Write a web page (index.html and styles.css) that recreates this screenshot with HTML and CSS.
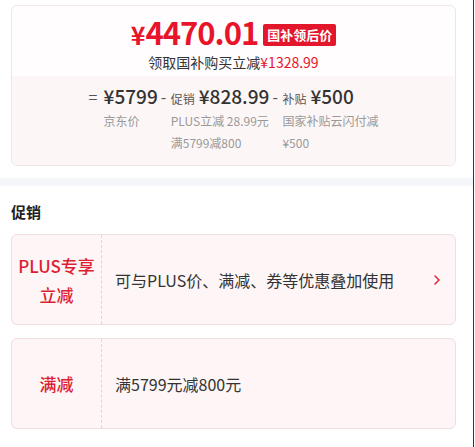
FILE: index.html
```html
<!DOCTYPE html>
<html lang="zh-CN">
<head>
    <meta charset="UTF-8">
    <meta name="viewport" content="width=device-width, initial-scale=1.0">
    <title>促销</title>
    <link rel="stylesheet" href="styles.css">
</head>
<body>
    <div class="page">
        <div class="price-card">
            <div class="price-top">
                <div class="final-line">
                    <span class="final-price"><span class="yen">¥</span>4470.01</span>
                    <span class="final-tag">国补领后价</span>
                </div>
                <div class="save-line">领取国补购买立减<span class="red">¥1328.99</span></div>
            </div>
            <div class="price-calc">
                <div class="calc-col">
                    <span class="mark eq">=</span>
                    <div class="calc-body">
                        <div class="calc-head"><span class="amount">¥5799</span></div>
                        <div class="calc-note">京东价</div>
                    </div>
                </div>
                <div class="calc-col">
                    <span class="mark">-</span>
                    <div class="calc-body">
                        <div class="calc-head"><span class="label">促销</span><span class="amount">¥828.99</span></div>
                        <div class="calc-note">PLUS立减 28.99元</div>
                        <div class="calc-note">满5799减800</div>
                    </div>
                </div>
                <div class="calc-col">
                    <span class="mark">-</span>
                    <div class="calc-body">
                        <div class="calc-head"><span class="label">补贴</span><span class="amount">¥500</span></div>
                        <div class="calc-note">国家补贴云闪付减</div>
                        <div class="calc-note">¥500</div>
                    </div>
                </div>
            </div>
        </div>

        <div class="divider"></div>

        <h2 class="section-title">促销</h2>

        <div class="promo">
            <div class="promo-name">PLUS专享<br>立减</div>
            <div class="promo-desc">可与PLUS价、满减、券等优惠叠加使用</div>
            <svg class="promo-arrow" width="8" height="12" viewBox="0 0 8 12">
                <path d="M2 2 L6 6 L2 10" fill="none" stroke="#e0283c" stroke-width="1.6" stroke-linecap="round" stroke-linejoin="round"/>
            </svg>
        </div>

        <div class="promo">
            <div class="promo-name">满减</div>
            <div class="promo-desc">满5799元减800元</div>
        </div>
    </div>
</body>
</html>
```

FILE: styles.css
```css
body {
    margin: 0;
    font-family: "Noto Sans CJK SC", "Noto Sans", sans-serif;
    color: #333;
    background: #fff;
}

.page {
    width: 474px;
    height: 447px;
    border-right: 1px solid #333;
    padding-top: 5px;
    box-sizing: border-box;
    overflow: hidden;
}

.price-card {
    margin: 0 17px 0 11px;
    border: 1px solid #eee6e7;
    border-radius: 6px;
    overflow: hidden;
    background: #fffdfd;
}

.price-top {
    height: 70px;
    text-align: center;
}

.final-line {
    display: flex;
    justify-content: center;
    align-items: center;
    padding-top: 10px;
    height: 34px;
}

.final-price {
    color: #e8142b;
    font-size: 31px;
    font-weight: 700;
    letter-spacing: -1px;
    line-height: 34px;
}

.final-price .yen {
    font-size: 25px;
    margin-right: 1px;
}

.final-tag {
    background: #e3172c;
    color: #fff;
    font-size: 13px;
    font-weight: 700;
    line-height: 22px;
    padding: 0 4px;
    border-radius: 2px;
    margin-left: 5px;
    margin-top: 3px;
}

.save-line {
    font-size: 14px;
    line-height: 20px;
    margin-top: 2px;
    color: #333;
}

.red {
    color: #e8142b;
}

.price-calc {
    display: flex;
    justify-content: center;
    gap: 3px;
    background: #fdf6f6;
    padding: 6px 0 12px 0;
    height: 71px;
}

.calc-col {
    display: flex;
}

.mark {
    font-size: 16px;
    line-height: 28px;
    width: 10px;
    color: #555;
}

.mark.eq {
    width: 15px;
}

.calc-head {
    display: flex;
    align-items: baseline;
    height: 28px;
    line-height: 28px;
}

.label {
    font-size: 12px;
    color: #555;
    margin-right: 4px;
}

.amount {
    font-size: 19px;
    font-weight: 500;
    color: #333;
}

.calc-note {
    font-size: 12px;
    line-height: 22px;
    color: #999;
}

.divider {
    height: 8px;
    background: #f5f6f9;
    margin-top: 12px;
}

.section-title {
    margin: 15px 0 0 11px;
    font-size: 15px;
    font-weight: 700;
    line-height: 22px;
    color: #222;
}

.promo {
    display: flex;
    align-items: center;
    margin: 11px 17px 0 11px;
    height: 91px;
    box-sizing: border-box;
    border: 1px solid #f2dde0;
    border-radius: 6px;
    background: #fdf5f6;
}

.promo + .promo {
    margin-top: 13px;
}

.promo-name {
    width: 89px;
    align-self: stretch;
    display: flex;
    align-items: center;
    justify-content: center;
    text-align: center;
    border-right: 1px dashed #e6d2d5;
    color: #dd1f33;
    font-size: 17px;
    line-height: 29px;
    font-weight: 500;
}

.promo-desc {
    flex: 1;
    padding-left: 13px;
    font-size: 16px;
    color: #333;
}

.promo-arrow {
    margin-right: 14px;
}
```
